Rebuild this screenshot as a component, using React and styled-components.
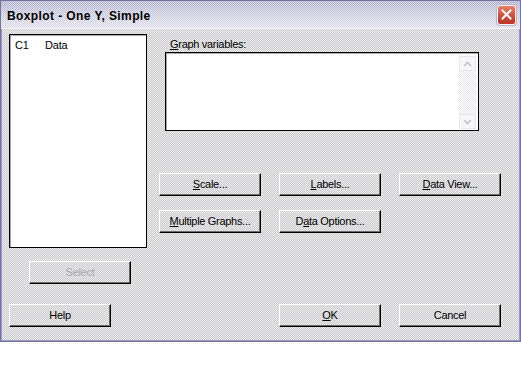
import React from "react";
import styled, { createGlobalStyle, css } from "styled-components";

const Global = createGlobalStyle`
  html, body { margin: 0; padding: 0; background: #ffffff; }
  body { font-family: "Liberation Sans", Arial, sans-serif; }
`;

const dither = css`
  background-color: #dcdcde;
  background-image: repeating-conic-gradient(#c9c9cd 0 25%, #eeeeee 0 50%);
  background-size: 2px 2px;
`;

const Window = styled.div`
  width: 521px;
  height: 342px;
  box-sizing: border-box;
  border: 1px solid #74749f;
  display: flex;
  flex-direction: column;
  ${dither};
`;

const TitleBar = styled.div`
  height: 28px;
  flex: none;
  display: flex;
  align-items: center;
  justify-content: space-between;
  padding: 0 4px 0 6px;
  box-sizing: border-box;
  border-bottom: 1px solid #f4f4f8;
  background:
    repeating-conic-gradient(rgba(255,255,255,0.55) 0 25%, transparent 0 50%) 0 0 / 2px 2px,
    linear-gradient(#a8a8c8 0%, #c4c4da 45%, #dcdce8 100%);
`;

const Title = styled.span`
  font-weight: bold;
  font-size: 12px;
  letter-spacing: 0.4px;
  color: #000;
  margin-top: 2px;
`;

const CloseButton = styled.div`
  width: 19px;
  height: 20px;
  box-sizing: border-box;
  border: 1px solid #f6f0f0;
  border-radius: 3px;
  background: linear-gradient(#e8806a, #d24c3c 55%, #b83828);
  display: flex;
  align-items: center;
  justify-content: center;
  box-shadow: 0 0 0 1px #b8b8cc;
`;

const Body = styled.div`
  flex: 1;
  display: flex;
  flex-direction: column;
  padding: 5px 19px 0 8px;
  box-shadow: inset 1px 0 #9a9ac0, inset -1px 0 #9a9ac0, inset 0 -1px #9a9ac0;
`;

const TopArea = styled.div`
  display: flex;
`;

const LeftCol = styled.div`
  width: 138px;
  display: flex;
  flex-direction: column;
`;

const ListBox = styled.div`
  height: 214px;
  box-sizing: border-box;
  background: #fff;
  border: 1px solid #000;
  box-shadow: inset 1px 1px #a8a8a8;
  padding: 3px 5px;
  font-size: 11px;
  letter-spacing: -0.2px;
  color: #000;
`;

const ListRow = styled.div`
  display: flex;
  line-height: 14px;
`;

const ColId = styled.span`
  width: 30px;
`;

const RightCol = styled.div`
  margin-left: 12px;
  display: flex;
  flex-direction: column;
`;

const Label = styled.div`
  font-size: 11px;
  letter-spacing: -0.3px;
  line-height: 13px;
  margin: 4px 0 1px 11px;
  color: #000;
`;

const Acc = styled.span`
  text-decoration: underline;
  text-underline-offset: 1px;
`;

const VarBox = styled.div`
  margin-left: 6px;
  width: 314px;
  height: 79px;
  box-sizing: border-box;
  background: #fff;
  border: 1px solid #000;
  box-shadow: inset 1px 1px #a8a8a8;
  display: flex;
  justify-content: flex-end;
  padding: 3px 2px 1px 0;
`;

const Scrollbar = styled.div`
  width: 17px;
  display: flex;
  flex-direction: column;
  background-image: repeating-conic-gradient(#e4e4ea 0 25%, #ffffff 0 50%);
  background-size: 2px 2px;
`;

const ArrowBtn = styled.div`
  height: 15px;
  flex: none;
  box-sizing: border-box;
  border: 1px solid #e6e6ee;
  background: #f6f6f8;
  display: flex;
  align-items: center;
  justify-content: center;
`;

const Track = styled.div`
  flex: 1;
`;

const ButtonGrid = styled.div`
  margin-top: 42px;
  display: grid;
  grid-template-columns: repeat(3, 102px);
  column-gap: 18px;
  row-gap: 14px;
`;

const Button = styled.div`
  width: 102px;
  height: 23px;
  box-sizing: border-box;
  border-top: 1px solid #ffffff;
  border-left: 1px solid #ffffff;
  border-right: 1px solid #000000;
  border-bottom: 1px solid #000000;
  box-shadow: inset -1px -1px #6a6a6a;
  display: flex;
  align-items: center;
  justify-content: center;
  font-size: 11px;
  letter-spacing: -0.3px;
  color: ${(p) => (p.$disabled ? "#a8a8b0" : "#000")};
  padding-bottom: 1px;
`;

const SelectWrap = styled.div`
  margin: 13px 0 0 20px;
`;

const Footer = styled.div`
  margin-top: 20px;
  display: flex;
  gap: 18px;
`;

const Spacer = styled.div`
  flex: 1;
`;

const Chevron = ({ up }) => (
  <svg width="9" height="6" viewBox="0 0 9 6">
    <path
      d={up ? "M1 5 L4.5 1.5 L8 5" : "M1 1 L4.5 4.5 L8 1"}
      fill="none"
      stroke="#c4c4cc"
      strokeWidth="1.6"
    />
  </svg>
);

export default function App() {
  return (
    <>
      <Global />
      <Window>
        <TitleBar>
          <Title>Boxplot - One Y, Simple</Title>
          <CloseButton>
            <svg width="11" height="11" viewBox="0 0 11 11">
              <path d="M1.5 1.5 L9.5 9.5 M9.5 1.5 L1.5 9.5" stroke="#fff" strokeWidth="2" strokeLinecap="square" />
            </svg>
          </CloseButton>
        </TitleBar>
        <Body>
          <TopArea>
            <LeftCol>
              <ListBox>
                <ListRow>
                  <ColId>C1</ColId>
                  <span>Data</span>
                </ListRow>
              </ListBox>
              <SelectWrap>
                <Button $disabled>Select</Button>
              </SelectWrap>
            </LeftCol>
            <RightCol>
              <Label>
                <Acc>G</Acc>raph variables:
              </Label>
              <VarBox>
                <Scrollbar>
                  <ArrowBtn>
                    <Chevron up />
                  </ArrowBtn>
                  <Track />
                  <ArrowBtn>
                    <Chevron />
                  </ArrowBtn>
                </Scrollbar>
              </VarBox>
              <ButtonGrid>
                <Button>
                  <Acc>S</Acc>cale...
                </Button>
                <Button>
                  <Acc>L</Acc>abels...
                </Button>
                <Button>
                  <Acc>D</Acc>ata View...
                </Button>
                <Button>
                  <Acc>M</Acc>ultiple Graphs...
                </Button>
                <Button>
                  D<Acc>a</Acc>ta Options...
                </Button>
              </ButtonGrid>
            </RightCol>
          </TopArea>
          <Footer>
            <Button>Help</Button>
            <Spacer />
            <Button>
              <Acc>O</Acc>K
            </Button>
            <Button>Cancel</Button>
          </Footer>
        </Body>
      </Window>
    </>
  );
}
